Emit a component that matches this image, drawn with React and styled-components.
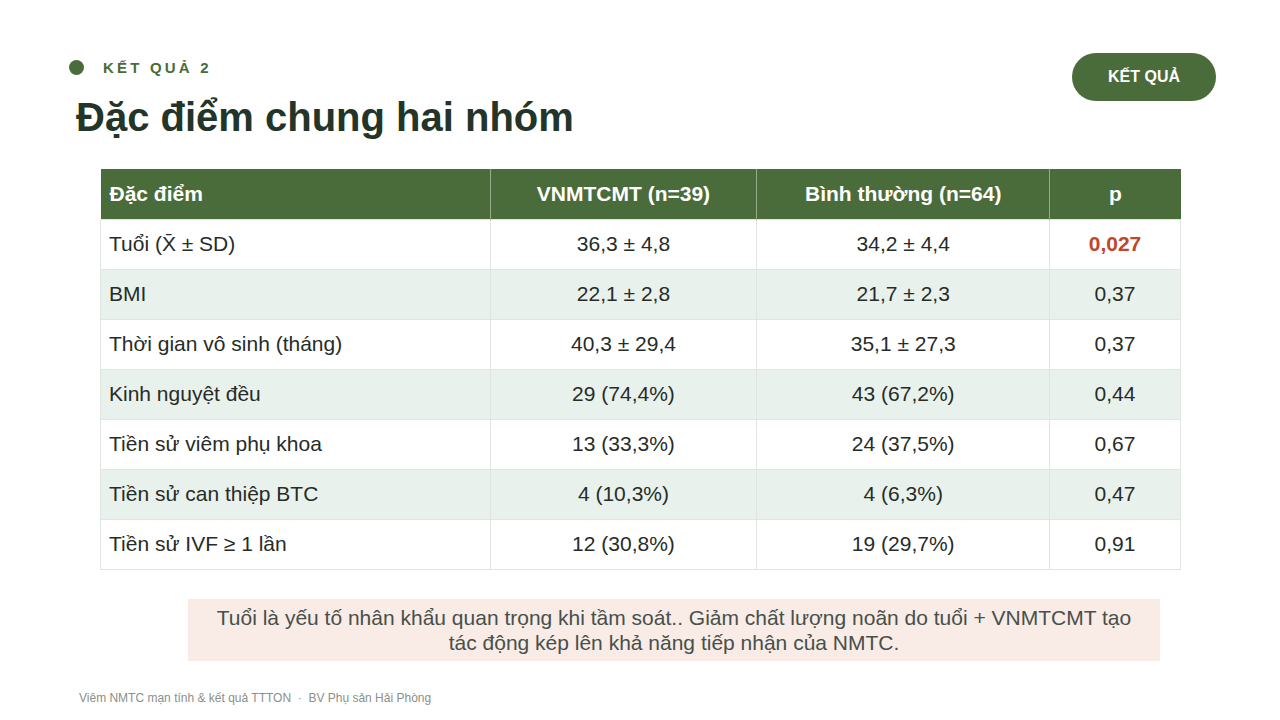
import React from "react";
import styled, { createGlobalStyle } from "styled-components";

const GlobalStyle = createGlobalStyle`
  html, body {
    margin: 0;
    padding: 0;
    background: #ffffff;
  }
  * {
    box-sizing: border-box;
  }
`;

const Slide = styled.div`
  width: 1280px;
  height: 720px;
  position: relative;
  overflow: hidden;
  background: #ffffff;
  font-family: "Liberation Sans", Arial, sans-serif;
  color: #222a24;
  display: flex;
  flex-direction: column;
`;

const TopBar = styled.div`
  display: flex;
  justify-content: space-between;
  align-items: flex-start;
  padding: 53px 64px 0 69px;
`;

const Heading = styled.div`
  display: flex;
  flex-direction: column;
`;

const Eyebrow = styled.div`
  display: flex;
  align-items: center;
  gap: 19px;
  margin-top: 6px;
  font-size: 15px;
  font-weight: 700;
  letter-spacing: 3.2px;
  color: #4a6b3a;
`;

const Dot = styled.span`
  width: 15px;
  height: 15px;
  border-radius: 50%;
  background: #4a6b3a;
`;

const Title = styled.h1`
  margin: 19px 0 0 7px;
  font-size: 40px;
  font-weight: 700;
  color: #223528;
  letter-spacing: 0;
`;

const Pill = styled.div`
  width: 144px;
  height: 48px;
  border-radius: 24px;
  background: #4a6b3a;
  color: #ffffff;
  font-size: 16px;
  font-weight: 700;
  display: flex;
  align-items: center;
  justify-content: center;
`;

const Table = styled.table`
  margin: 29px 0 0 100px;
  width: 1081px;
  border-collapse: collapse;
  font-size: 21px;
`;

const HeadCell = styled.th`
  height: 50px;
  padding: 0 9px;
  background: #4a6b3a;
  color: #ffffff;
  font-weight: 700;
  text-align: ${(p) => (p.left ? "left" : "center")};
  border: 1px solid #97ab8d;
  border-top: none;
  border-bottom: none;
  &:first-child { border-left: none; }
  &:last-child { border-right: none; }
`;

const Row = styled.tr`
  background: ${(p) => (p.shaded ? "#e9f1ec" : "#ffffff")};
`;

const Cell = styled.td`
  height: 50px;
  padding: 0 8px;
  border: 1px solid #dfe6e1;
  text-align: ${(p) => (p.left ? "left" : "center")};
  color: ${(p) => (p.highlight ? "#c0472a" : "#262c28")};
  font-weight: ${(p) => (p.highlight ? 700 : 400)};
`;

const Note = styled.div`
  margin: 29px 0 0 188px;
  width: 972px;
  padding: 6px 20px;
  background: #f9ebe6;
  color: #47504a;
  font-size: 21px;
  line-height: 25px;
  text-align: center;
`;

const Footer = styled.div`
  margin: 30px 0 0 79px;
  font-size: 12px;
  color: #8a8f8b;
`;

const rows = [
  ["Tuổi (X̄ ± SD)", "36,3 ± 4,8", "34,2 ± 4,4", "0,027", true],
  ["BMI", "22,1 ± 2,8", "21,7 ± 2,3", "0,37"],
  ["Thời gian vô sinh (tháng)", "40,3 ± 29,4", "35,1 ± 27,3", "0,37"],
  ["Kinh nguyệt đều", "29 (74,4%)", "43 (67,2%)", "0,44"],
  ["Tiền sử viêm phụ khoa", "13 (33,3%)", "24 (37,5%)", "0,67"],
  ["Tiền sử can thiệp BTC", "4 (10,3%)", "4 (6,3%)", "0,47"],
  ["Tiền sử IVF ≥ 1 lần", "12 (30,8%)", "19 (29,7%)", "0,91"],
];

export default function App() {
  return (
    <Slide>
      <GlobalStyle />
      <TopBar>
        <Heading>
          <Eyebrow>
            <Dot />
            KẾT QUẢ 2
          </Eyebrow>
          <Title>Đặc điểm chung hai nhóm</Title>
        </Heading>
        <Pill>KẾT QUẢ</Pill>
      </TopBar>

      <Table>
        <colgroup>
          <col style={{ width: 390 }} />
          <col style={{ width: 267 }} />
          <col style={{ width: 293 }} />
          <col style={{ width: 131 }} />
        </colgroup>
        <thead>
          <tr>
            <HeadCell left>Đặc điểm</HeadCell>
            <HeadCell>VNMTCMT (n=39)</HeadCell>
            <HeadCell>Bình thường (n=64)</HeadCell>
            <HeadCell>p</HeadCell>
          </tr>
        </thead>
        <tbody>
          {rows.map((r, i) => (
            <Row key={i} shaded={i % 2 === 1}>
              <Cell left>{r[0]}</Cell>
              <Cell>{r[1]}</Cell>
              <Cell>{r[2]}</Cell>
              <Cell highlight={r[4]}>{r[3]}</Cell>
            </Row>
          ))}
        </tbody>
      </Table>

      <Note>
        Tuổi là yếu tố nhân khẩu quan trọng khi tầm soát.. Giảm chất lượng noãn do tuổi + VNMTCMT tạo
        tác động kép lên khả năng tiếp nhận của NMTC.
      </Note>

      <Footer>Viêm NMTC mạn tính &amp; kết quả TTTON&nbsp; ·&nbsp; BV Phụ sản Hải Phòng</Footer>
    </Slide>
  );
}
